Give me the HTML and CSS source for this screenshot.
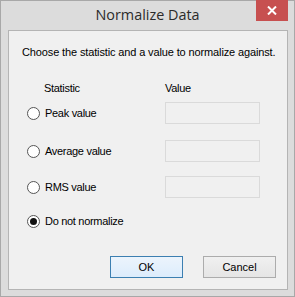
FILE: index.html
```html
<!DOCTYPE html>
<html lang="en">
<head>
  <meta charset="UTF-8" />
  <title>Normalize Data</title>
  <link rel="stylesheet" href="styles.css">
</head>
<body>

<div class="window">
  <div class="titlebar">
    <span class="title">Normalize Data</span>
    <button class="close" aria-label="Close">
      <svg width="10" height="9" viewBox="0 0 10 9">
        <path d="M1 0.5 L9 8.5 M9 0.5 L1 8.5" stroke="#fff" stroke-width="2" />
      </svg>
    </button>
  </div>

  <div class="client">
    <p class="intro">Choose the statistic and a value to normalize against.</p>

    <div class="grid">
      <div class="head stat">Statistic</div>
      <div class="head">Value</div>

      <label class="option"><span class="radio"></span>Peak value</label>
      <div class="field"></div>

      <label class="option"><span class="radio"></span>Average value</label>
      <div class="field"></div>

      <label class="option"><span class="radio"></span>RMS value</label>
      <div class="field"></div>

      <label class="option"><span class="radio checked"></span>Do not normalize</label>
      <div></div>
    </div>

    <div class="buttons">
      <button class="btn default">OK</button>
      <button class="btn">Cancel</button>
    </div>
  </div>
</div>

</body>
</html>
```

FILE: styles.css
```css
body {
  margin: 0;
  padding: 0;
  font-family: 'Liberation Sans', Arial, sans-serif;
  background: #ffffff;
}
.window {
  width: 293px;
  height: 295px;
  background: #dcdcdc;
  border: 1px solid #a8a8a8;
  display: flex;
  flex-direction: column;
}
.titlebar {
  height: 29px;
  position: relative;
  display: flex;
  justify-content: center;
  align-items: center;
}
.title {
  font-family: 'Open Sans', 'Liberation Sans', sans-serif;
  font-size: 14.4px;
  color: #2b2b2b;
  margin-top: -3px;
}
.close {
  position: absolute;
  top: -1px;
  right: 6px;
  width: 32px;
  height: 21px;
  background: #c75050;
  border: none;
  padding: 0;
  display: flex;
  justify-content: center;
  align-items: center;
}
.client {
  margin: 0 6px 0 7px;
  height: 258px;
  background: #f0f0f0;
  border: 1px solid #b4b4b4;
  font-size: 11px;
  line-height: 13px;
  letter-spacing: -0.3px;
  color: #000;
  position: relative;
}
.intro {
  margin: 15px 0 0 13px;
  white-space: nowrap;
  letter-spacing: -0.13px;
}
.grid {
  display: grid;
  grid-template-columns: 138px 95px;
  grid-template-rows: 20px 38px 36px 34px 22px;
  margin: 23px 0 0 18px;
  align-items: start;
}
.stat {
  padding-left: 17px;
}
.option {
  display: flex;
  align-items: center;
  gap: 5px;
  height: 22px;
}
.radio {
  width: 11px;
  height: 11px;
  border: 1px solid #555;
  border-radius: 50%;
  background: #fff;
  position: relative;
}
.radio.checked::after {
  content: "";
  position: absolute;
  left: 2px;
  top: 2px;
  width: 7px;
  height: 7px;
  border-radius: 50%;
  background: #111;
}
.field {
  height: 20px;
  border: 1px solid #dadada;
  background: #f0f0f0;
}
.buttons {
  position: absolute;
  right: 11px;
  bottom: 11px;
  display: flex;
  gap: 20px;
}
.btn {
  width: 73px;
  height: 22px;
  font-family: 'Liberation Sans', Arial, sans-serif;
  font-size: 11px;
  border: 1px solid #acacac;
  background: linear-gradient(#f0f0f0, #e5e5e5);
  padding: 0;
}
.btn.default {
  border-color: #3c7fb1;
  background: linear-gradient(#ecf4fc, #dcecfc);
}
```
